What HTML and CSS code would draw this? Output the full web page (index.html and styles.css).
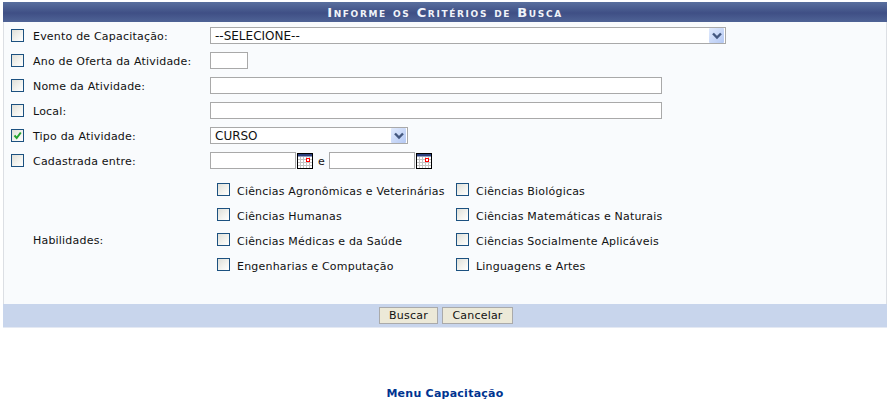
FILE: index.html
```html
<!DOCTYPE html>
<html lang="pt-BR">
<head>
<meta charset="utf-8">
<title>Informe os Critérios de Busca</title>
<link rel="stylesheet" href="styles.css">
</head>
<body>
<form class="panel">
  <h1 class="caption">Informe os Critérios de Busca</h1>
  <div class="fields">
    <div class="row">
      <span class="check"></span><span class="label">Evento de Capacitação:</span>
      <div class="select wide"><span class="select-text">--SELECIONE--</span><span class="arrow"><svg width="14" height="8" viewBox="0 0 14 8"><path d="M3 1.5 7 5.5 11 1.5" fill="none" stroke="#44587f" stroke-width="2.4"/></svg></span></div>
    </div>
    <div class="row">
      <span class="check"></span><span class="label">Ano de Oferta da Atividade:</span>
      <input class="text year" type="text">
    </div>
    <div class="row">
      <span class="check"></span><span class="label">Nome da Atividade:</span>
      <input class="text long" type="text">
    </div>
    <div class="row">
      <span class="check"></span><span class="label">Local:</span>
      <input class="text long" type="text">
    </div>
    <div class="row">
      <span class="check"><svg width="11" height="11" viewBox="0 0 11 11"><path d="M2.5 5.5 4.7 8 8.8 2.5" fill="none" stroke="#25a32f" stroke-width="2"/></svg></span><span class="label">Tipo da Atividade:</span>
      <div class="select medium"><span class="select-text">CURSO</span><span class="arrow"><svg width="14" height="8" viewBox="0 0 14 8"><path d="M3 1.5 7 5.5 11 1.5" fill="none" stroke="#44587f" stroke-width="2.4"/></svg></span></div>
    </div>
    <div class="row">
      <span class="check"></span><span class="label">Cadastrada entre:</span>
      <input class="text date" type="text">
      <svg class="cal" width="16" height="16" viewBox="0 0 16 16"><rect x="0.5" y="0.5" width="15" height="15" fill="#fff" stroke="#000"/><rect x="1" y="1" width="14" height="2.5" fill="#2a3f7c"/><path d="M1 6.5H15M1 9.5H15M1 12.5H15M3.5 4V15M6.5 4V15M9.5 4V15M12.5 4V15" stroke="#c4c4c4" fill="none"/><rect x="9.5" y="5.5" width="3" height="3" fill="#fff" stroke="#f00"/></svg>
      <span class="and">e</span>
      <input class="text date" type="text">
      <svg class="cal" width="16" height="16" viewBox="0 0 16 16"><rect x="0.5" y="0.5" width="15" height="15" fill="#fff" stroke="#000"/><rect x="1" y="1" width="14" height="2.5" fill="#2a3f7c"/><path d="M1 6.5H15M1 9.5H15M1 12.5H15M3.5 4V15M6.5 4V15M9.5 4V15M12.5 4V15" stroke="#c4c4c4" fill="none"/><rect x="9.5" y="5.5" width="3" height="3" fill="#fff" stroke="#f00"/></svg>
    </div>
    <div class="skills">
      <span class="skills-label">Habilidades:</span>
      <div class="skills-grid">
        <label class="skill"><span class="check"></span><span>Ciências Agronômicas e Veterinárias</span></label>
        <label class="skill"><span class="check"></span><span>Ciências Biológicas</span></label>
        <label class="skill"><span class="check"></span><span>Ciências Humanas</span></label>
        <label class="skill"><span class="check"></span><span>Ciências Matemáticas e Naturais</span></label>
        <label class="skill"><span class="check"></span><span>Ciências Médicas e da Saúde</span></label>
        <label class="skill"><span class="check"></span><span>Ciências Socialmente Aplicáveis</span></label>
        <label class="skill"><span class="check"></span><span>Engenharias e Computação</span></label>
        <label class="skill"><span class="check"></span><span>Linguagens e Artes</span></label>
      </div>
    </div>
  </div>
  <div class="actions">
    <button class="btn" type="button">Buscar</button>
    <button class="btn" type="button">Cancelar</button>
  </div>
</form>
<div class="back"><a href="#">Menu Capacitação</a></div>
</body>
</html>
```
FILE: styles.css
```css
* { box-sizing: border-box; }
html, body { margin: 0; padding: 0; background: #fff; }
body {
  width: 891px;
  height: 405px;
  overflow: hidden;
  padding: 2px 4px 0 3px;
  font: 11px "DejaVu Sans", Verdana, sans-serif;
  letter-spacing: 0.2px;
  color: #111;
}
.panel { display: block; margin: 0; }
.caption {
  margin: 0;
  height: 20px;
  line-height: 21px;
  text-align: center;
  font-size: 13px;
  font-weight: bold;
  font-variant: small-caps;
  letter-spacing: 1.65px;
  color: #f0f3f9;
  background: linear-gradient(#596f9e 0, #3f4f85 55%, #4f6396 100%);
}
.fields {
  height: 282px;
  padding-top: 2px;
  background: #f9fbfd;
  border-left: 1px solid #dcdfe4;
  border-right: 1px solid #dcdfe4;
}
.row {
  display: flex;
  align-items: center;
  height: 25px;
  padding-left: 7px;
}
.check {
  flex: none;
  width: 13px;
  height: 13px;
  display: inline-flex;
  align-items: center;
  justify-content: center;
  border: 1px solid #1c5180;
  background: linear-gradient(135deg, #dfdfd8 0, #f4f4f0 60%, #fff 100%);
}
.row > .check { margin-bottom: 2px; }
.label {
  flex: none;
  width: 177px;
  margin-left: 9px;
}
.text, .select {
  height: 17px;
  border: 1px solid #a9a9a9;
  background: #fff;
  margin: 0 0 2px;
  padding: 0;
  outline: 0;
  border-radius: 0;
}
.year { width: 38px; }
.long { width: 452px; }
.date { width: 86px; }
.select {
  display: flex;
  align-items: center;
  justify-content: space-between;
  padding: 0 1px 0 4px;
  font-size: 12px;
  letter-spacing: 0;
}
.wide { width: 516px; }
.medium { width: 198px; }
.arrow {
  width: 15px;
  height: 15px;
  border-radius: 1px;
  display: flex;
  align-items: center;
  justify-content: center;
  background: linear-gradient(135deg, #e1ebfd, #b4c8f3);
}
.cal { flex: none; margin: 0 0 2px 1px; }
.and { margin: 0 4px 0 5px; }
.skills {
  display: flex;
  align-items: center;
  padding-top: 5px;
  padding-left: 29px;
}
.skills-label { width: 184px; flex: none; margin-top: 22px; }
.skills-grid {
  display: grid;
  grid-template-columns: 239px auto;
  grid-auto-rows: 25px;
}
.skill {
  display: flex;
  align-items: center;
  gap: 7px;
}
.skill .check { margin-bottom: 4px; }
.actions {
  height: 24px;
  background: #c8d5ec;
  display: flex;
  justify-content: center;
  align-items: center;
  gap: 4px;
  padding-left: 2px;
  border-bottom: 1px solid #e4e9f3;
}
.btn {
  height: 17px;
  padding: 0;
  margin: 0;
  font: 11px "DejaVu Sans", Verdana, sans-serif;
  letter-spacing: 0.2px;
  color: #111;
  background: #ece9d8;
  border: 1px solid #aaa;
  border-radius: 0;
}
.btn:first-child { width: 59px; }
.btn:last-child { width: 71px; }
.back {
  margin-top: 59px;
  text-align: center;
  font-weight: bold;
  letter-spacing: 0.25px;
}
.back a { color: #003390; text-decoration: none; }
```
